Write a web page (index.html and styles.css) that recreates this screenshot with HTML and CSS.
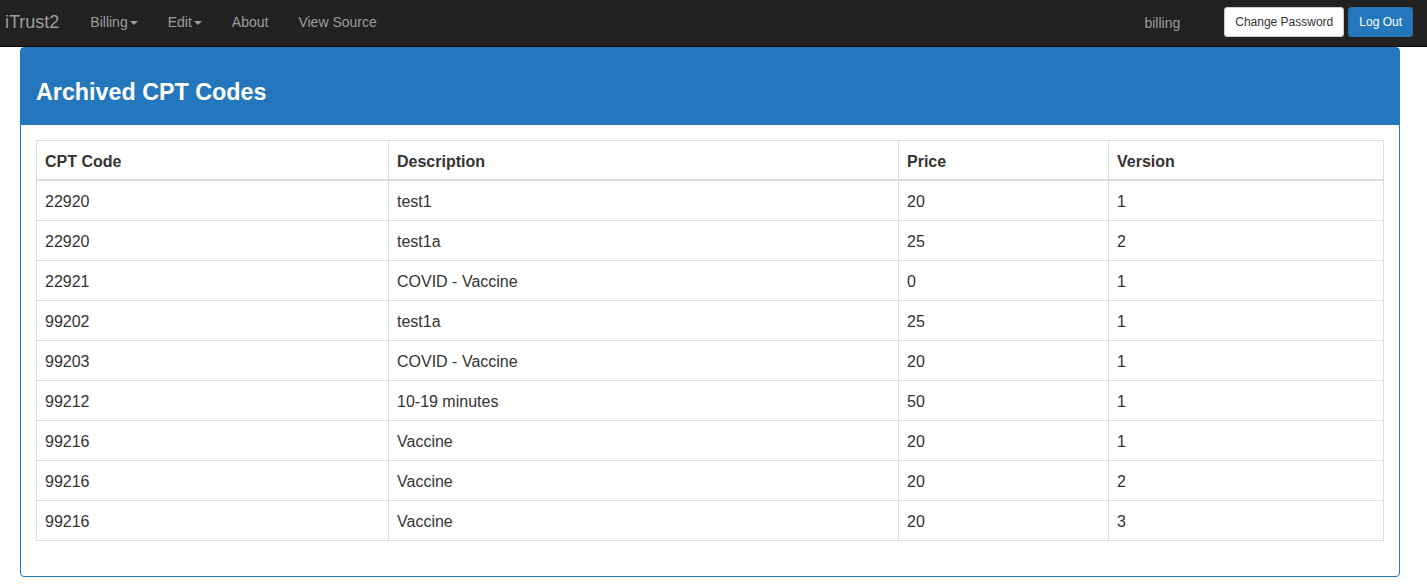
FILE: index.html
```html
<!DOCTYPE html>
<html>
<head>
<meta charset="utf-8">
<title>iTrust2</title>
<link rel="stylesheet" href="styles.css">
</head>
<body>
<nav class="navbar">
  <a class="brand">iTrust2</a>
  <ul class="nav">
    <li><a>Billing<span class="caret"></span></a></li>
    <li><a>Edit<span class="caret"></span></a></li>
    <li><a>About</a></li>
    <li><a>View Source</a></li>
  </ul>
  <div class="nav-right">
    <span class="user">billing</span>
    <button class="btn btn-default">Change Password</button>
    <button class="btn btn-primary">Log Out</button>
  </div>
</nav>
<div class="panel">
  <div class="panel-heading"><h3>Archived CPT Codes</h3></div>
  <div class="panel-body">
    <table class="table">
      <thead>
        <tr><th class="c1">CPT Code</th><th class="c2">Description</th><th class="c3">Price</th><th>Version</th></tr>
      </thead>
      <tbody>
        <tr><td>22920</td><td>test1</td><td>20</td><td>1</td></tr>
        <tr><td>22920</td><td>test1a</td><td>25</td><td>2</td></tr>
        <tr><td>22921</td><td>COVID - Vaccine</td><td>0</td><td>1</td></tr>
        <tr><td>99202</td><td>test1a</td><td>25</td><td>1</td></tr>
        <tr><td>99203</td><td>COVID - Vaccine</td><td>20</td><td>1</td></tr>
        <tr><td>99212</td><td>10-19 minutes</td><td>50</td><td>1</td></tr>
        <tr><td>99216</td><td>Vaccine</td><td>20</td><td>1</td></tr>
        <tr><td>99216</td><td>Vaccine</td><td>20</td><td>2</td></tr>
        <tr><td>99216</td><td>Vaccine</td><td>20</td><td>3</td></tr>
      </tbody>
    </table>
  </div>
</div>
</body>
</html>
```
FILE: styles.css
```css
* { box-sizing: border-box; }
body {
  margin: 0;
  font-family: "Liberation Sans", Arial, Helvetica, sans-serif;
  font-size: 14px;
  line-height: 1.42857;
  color: #333;
  background: #fff;
}
.navbar {
  display: flex;
  align-items: center;
  height: 47px;
  background: #222;
  border-bottom: 1px solid #080808;
  padding: 0 14px 2px 5px;
}
.brand {
  font-size: 18px;
  line-height: 20px;
  color: #9d9d9d;
  margin-right: 16px;
}
.nav {
  display: flex;
  list-style: none;
  margin: 0;
  padding: 0;
}
.nav a {
  display: block;
  padding: 0 15px;
  color: #9d9d9d;
  line-height: 20px;
}
.caret {
  display: inline-block;
  width: 0;
  height: 0;
  margin-left: 2px;
  vertical-align: middle;
  border-top: 4px solid;
  border-left: 4px solid transparent;
  border-right: 4px solid transparent;
}
.nav-right {
  margin-left: auto;
  display: flex;
  align-items: center;
}
.user {
  color: #9d9d9d;
  margin-right: 44px;
  margin-top: 4px;
}
.btn {
  font-family: inherit;
  font-size: 12px;
  line-height: 1.5;
  padding: 5px 10px;
  border-radius: 3px;
  border: 1px solid transparent;
  margin-top: -1px;
}
.btn-default {
  background: #fff;
  color: #333;
  border-color: #ccc;
  margin-right: 4px;
}
.btn-primary {
  background: #2477bc;
  border-color: #2e6da4;
  color: #fff;
}
.panel {
  margin: 0 27px 0 20px;
  border: 1px solid #2477bc;
  border-radius: 4px;
}
.panel-heading {
  background: #2477bc;
  color: #fff;
  padding: 10px 15px;
}
.panel-heading h3 {
  margin: 21px 0 9px;
  font-size: 23.3px;
  font-weight: bold;
  line-height: 27px;
}
.panel-body {
  padding: 15px;
}
.table {
  width: 100%;
  border-collapse: collapse;
  margin-bottom: 20px;
  font-size: 16px;
  line-height: 23px;
  border: 1px solid #ddd;
}
.table th, .table td {
  text-align: left;
  padding: 9px 8px 7px;
  border: 1px solid #ddd;
}
.table thead th {
  line-height: 22px;
  padding-top: 10px;
  padding-bottom: 6px;
  border-bottom: 2px solid #ddd;
}
.c1 { width: 352px; }
.c2 { width: 510px; }
.c3 { width: 210px; }
```
